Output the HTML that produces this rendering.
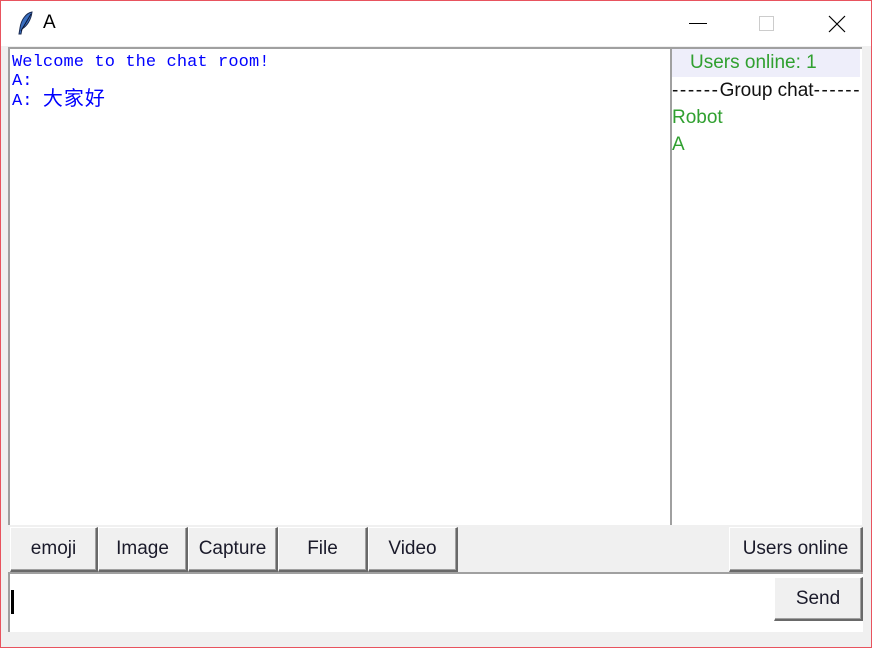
<!DOCTYPE html>
<html><head><meta charset="utf-8"><style>
*{margin:0;padding:0;box-sizing:border-box}
body{width:872px;height:648px;overflow:hidden;background:#f0f0f0;position:relative;font-family:"Liberation Sans","Noto Sans CJK SC",sans-serif}
.win{position:absolute;left:0;top:0;width:872px;height:648px;border:1px solid #e8535e;}
.title{position:absolute;left:1px;top:1px;width:870px;height:45px;background:#fff}
.title .t{position:absolute;left:42px;top:11px;font-size:19px;color:#000}
.abs{position:absolute}
.chat{left:8px;top:47px;width:662px;height:478px;background:#fff;border-top:2px solid #a0a0a0;border-left:2px solid #a0a0a0;font-family:"Liberation Mono","Noto Sans CJK SC",monospace;font-size:17px;line-height:19px;color:#0000ff;padding:4px 0 0 2px;white-space:pre;letter-spacing:0.1px}
.chat span{font-size:20px;letter-spacing:1px}
.users{left:670px;top:47px;width:192px;height:478px;background:#fff;border-top:2px solid #a0a0a0;border-left:2px solid #a0a0a0;font-size:19px;line-height:27px}
.btn{position:absolute;background:#f0f0f0;border-top:1px solid #fff;border-left:1px solid #fff;border-right:2px solid #696969;border-bottom:2px solid #696969;font-size:19px;color:#1a1a2a;text-align:center;line-height:42px;box-shadow:inset -1px -1px 0 #a0a0a0}
.input{left:8px;top:572px;width:855px;height:60px;background:#fff;border-top:2px solid #a0a0a0;border-left:2px solid #a0a0a0}
</style></head><body>
<div class="win"></div>
<div class="title">
<svg class="abs" style="left:15px;top:9px" width="20" height="26" viewBox="0 0 20 26"><path d="M16 2 C10 3 5 10 4 18 L3 24 L5 24 L6 19 C11 16 15 10 16 2Z" fill="#3a6fc0" stroke="#1a2a50" stroke-width="1"/><path d="M15 4 L5 21" stroke="#0a1430" stroke-width="1"/></svg>
<span class="t">A</span>
<div class="abs" style="left:688px;top:22px;width:18px;height:1px;background:#000"></div>
<div class="abs" style="left:758px;top:15px;width:15px;height:15px;border:1px solid #ccc"></div>
<svg class="abs" style="left:827px;top:14px" width="18" height="18"><path d="M1 1L17 17M17 1L1 17" stroke="#000" stroke-width="1.2"/></svg>
</div>
<div class="abs chat">Welcome to the chat room!
A:
A: <span>大家好</span></div>
<div class="abs users">
<div style="background:#eeeefa;height:28px;line-height:28px;color:#30a030;padding-left:18px;width:188px">Users online: 1</div>
<div style="color:#111;white-space:nowrap"><span style="letter-spacing:1.6px">------</span>Group chat<span style="letter-spacing:1.6px">------</span></div>
<div style="color:#30a030">Robot</div>
<div style="color:#30a030">A</div>
</div>
<div class="btn" style="left:10px;top:527px;width:88px;height:45px">emoji</div>
<div class="btn" style="left:98px;top:527px;width:90px;height:45px">Image</div>
<div class="btn" style="left:188px;top:527px;width:90px;height:45px">Capture</div>
<div class="btn" style="left:278px;top:527px;width:90px;height:45px">File</div>
<div class="btn" style="left:368px;top:527px;width:90px;height:45px">Video</div>
<div class="btn" style="left:729px;top:527px;width:134px;height:45px">Users online</div>
<div class="abs input"><div class="abs" style="left:1px;top:16px;width:3px;height:24px;background:#000"></div></div>
<div class="btn" style="left:774px;top:577px;width:89px;height:44px">Send</div>
</body></html>
